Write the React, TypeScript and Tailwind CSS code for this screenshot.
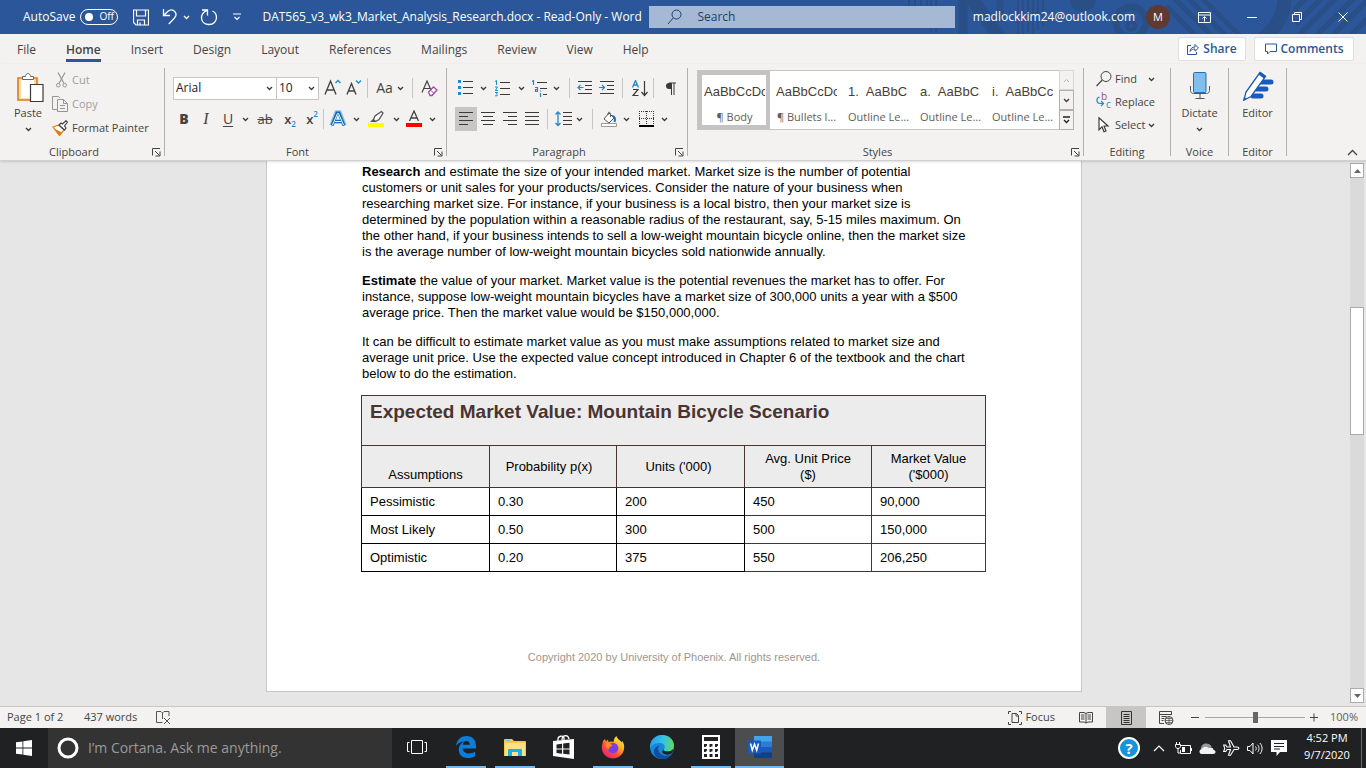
import type { ReactNode } from 'react';

const ui = "font-['Open_Sans','Noto_Sans',sans-serif]";
const doc = "font-['Liberation_Sans',Arial,sans-serif]";

function Svg({ w, h, children, className = '' }: { w: number; h: number; children: ReactNode; className?: string }) {
  return (
    <svg width={w} height={h} viewBox={`0 0 ${w} ${h}`} fill="none" className={`shrink-0 ${className}`} aria-hidden="true">
      {children}
    </svg>
  );
}

function Chevron() {
  return (
    <Svg w={7} h={5}>
      <path d="M1 1l2.5 2.5L6 1" stroke="#3b3a39" strokeWidth="1.3" />
    </Svg>
  );
}

function Tool({ label, className, children }: { label: string; className: string; children: ReactNode }) {
  return (
    <button type="button" aria-label={label} className={`flex h-6 shrink-0 items-center justify-center text-[#444] ${className}`}>
      {children}
    </button>
  );
}

function Sep({ className = '' }: { className?: string }) {
  return <span className={`h-5 w-px shrink-0 bg-[#c8c6c4] ${className}`} />;
}

function Group({ title, className, launcher, children }: { title: string; className: string; launcher?: boolean; children: ReactNode }) {
  return (
    <section aria-label={title} className={`flex flex-col py-1 ${className}`}>
      <div className="flex flex-1 flex-col border-r border-[#b3b0ad]">
        <div className="flex-1">{children}</div>
        <div className="flex h-2 items-center">
          <span className="flex-1 text-center text-[11px] leading-4">{title}</span>
          {launcher && (
            <button type="button" aria-label={`${title} settings`} className="flex w-4 items-center justify-end pr-[3px]">
              <Svg w={9} h={9}>
                <path d="M.5 7.500V.5H8M3 3l4.500 4.500M8 3.500V8H3.500" stroke="#444" />
              </Svg>
            </button>
          )}
        </div>
      </div>
    </section>
  );
}

const tabs = ['File', 'Home', 'Insert', 'Design', 'Layout', 'References', 'Mailings', 'Review', 'View', 'Help'];

function TitleBar() {
  return (
    <header className="relative flex h-[34px] shrink-0 items-center overflow-hidden bg-[#2b579a] text-white">
      <svg width="536" height="34" viewBox="0 0 536 34" fill="none" className="absolute top-0 right-0" aria-hidden="true">
        <g stroke="#294f86">
          <path d="M79 0v6M85 0v6M91 0v6M97 0v6M101 0v32M106 0v32M188 0v34M193 0v34M198 0v32M203 0v34M208 0v30M213 0v26" strokeWidth="2" />
          <path d="M133 0v34" strokeWidth="9" />
          <path d="M138 -6l34 46" strokeWidth="13" />
          <path d="M170 0v22" strokeWidth="7" />
          <circle cx="301" cy="22" r="15" strokeWidth="7" />
          <circle cx="301" cy="26" r="4" strokeWidth="4" />
          <path d="M344 -2l38 38M358 -2l38 38M372 -2l38 38M336 6l30 30" strokeWidth="5" />
          <path d="M454 -4c2 16-8 34-24 44" strokeWidth="14" />
          <path d="M464 10l12-12M466 24l26-26M466 38l40-40M484 38l40-40M500 38l40-40M518 38l20-20" strokeWidth="5" />
        </g>
        <circle cx="253" cy="-1" r="13" fill="#294f86" />
      </svg>
      <div className="relative flex w-full items-center">
        <label className="ml-[23px] flex items-center gap-[5px] text-xs">
          AutoSave
          <span className="relative flex h-4 w-[38px] items-center rounded-full border border-white">
            <input type="checkbox" role="switch" className="absolute inset-0 appearance-none" />
            <span className="ml-1 size-2 rounded-full bg-white" />
            <span className="ml-1.5 text-[10px]">Off</span>
          </span>
        </label>
        <button type="button" aria-label="Save" className="ml-[15px]">
          <Svg w={16} h={17}>
            <path d="M.5 1h15v15H3L.5 13.500zM3.500 1v6h9V1M4.500 16v-5h7v5M7 16v-2.500" stroke="#fff" strokeWidth="1.200" />
          </Svg>
        </button>
        <button type="button" aria-label="Undo" className="ml-[13px]">
          <Svg w={16} h={18}>
            <path d="M1.500 1v6.500H8M1.500 7.500L6 3.200c4-3.400 9 .8 7.800 4.600-.8 2.400-4 5-7 8.200" stroke="#fff" strokeWidth="1.300" />
          </Svg>
        </button>
        <button type="button" aria-label="Undo history" className="ml-[5px]">
          <Svg w={7} h={5}><path d="M1 1l2.500 2.500L6 1" stroke="#fff" strokeWidth="1.300" /></Svg>
        </button>
        <button type="button" aria-label="Repeat" className="ml-[10px]">
          <Svg w={18} h={18}>
            <path d="M2 2h5.500v5.500M7.300 2.300C3 4 1.200 7 1.500 10.500c.6 4 4 6 7.500 6 4.500 0 7.500-3.200 7.500-7 0-3-1.600-5.400-4-6.500" stroke="#fff" strokeWidth="1.300" />
          </Svg>
        </button>
        <button type="button" aria-label="Customize toolbar" className="ml-[15px]">
          <Svg w={8} h={8}><path d="M0 1h8M1.500 4L4 6.500 6.500 4" stroke="#fff" strokeWidth="1.200" /></Svg>
        </button>
        <span className="ml-[21px] w-[387px] text-xs whitespace-nowrap">DAT565_v3_wk3_Market_Analysis_Research.docx - Read-Only - Word</span>
        <label className="flex h-[22px] w-[306px] items-center bg-[#a5b8d4] pl-[18px]">
          <Svg w={16} h={16}>
            <circle cx="9.500" cy="5.500" r="4.500" stroke="#1e3f70" />
            <path d="M6.300 8.800L1 15" stroke="#1e3f70" />
          </Svg>
          <input type="text" aria-label="Search" placeholder="Search" className="ml-[14px] w-full bg-transparent text-xs outline-none placeholder:text-[#1e3f70]" />
        </label>
        <span className="ml-auto text-xs">madlockkim24@outlook.com</span>
        <span className="mr-[28px] ml-[11px] flex size-6 items-center justify-center rounded-full bg-[#5f3a31] text-[11px]">M</span>
        <button type="button" aria-label="Ribbon display options" className="mr-[36px]">
          <Svg w={13} h={11}><path d="M.5.500h12v10H.5zM.5 3h12M6.500 9.500V5M4.500 6.500l2-2 2 2" stroke="#fff" /></Svg>
        </button>
        <button type="button" aria-label="Minimize" className="mr-[35px]">
          <Svg w={10} h={10}><path d="M0 5.500h10" stroke="#fff" /></Svg>
        </button>
        <button type="button" aria-label="Restore" className="mr-[36px]">
          <Svg w={10} h={10}><path d="M.5 2.500h7v7h-7zM2.500 2.500v-2h7v7h-2" stroke="#fff" /></Svg>
        </button>
        <button type="button" aria-label="Close" className="mr-[18px]">
          <Svg w={10} h={10}><path d="M.5.500l9 9M9.500.500l-9 9" stroke="#fff" /></Svg>
        </button>
      </div>
    </header>
  );
}

function Tabs() {
  return (
    <nav className="flex h-[30px] shrink-0 items-center bg-[#f3f2f1] pr-3 pl-[17px] text-xs">
      <div className="flex flex-1 items-center gap-[30px]">
        {tabs.map((t) => (
          <button
            key={t}
            type="button"
            className={t === 'Home' ? 'relative h-7 pt-0.5 font-semibold after:absolute after:inset-x-0 after:bottom-px after:h-[3px] after:bg-[#2b579a]' : 'h-7 pt-0.5'}
          >
            {t}
          </button>
        ))}
      </div>
      <div className="flex gap-2 font-semibold text-[#2b579a]">
        <button type="button" className="flex h-6 w-[68px] items-center justify-center gap-1 rounded-xs border border-[#e1dfdd] bg-white">
          <Svg w={12} h={12}>
            <path d="M4 2.500H.5v9h9V9M3 8.500c.3-3 2-4.500 5-4.500V1.500L11.500 5 8 8.200V6C6 6 4.300 6.500 3 8.500z" stroke="#2b579a" />
          </Svg>
          Share
        </button>
        <button type="button" className="flex h-6 w-[100px] items-center justify-center gap-1 rounded-xs border border-[#e1dfdd] bg-white">
          <Svg w={12} h={12}><path d="M.5 1h11v7.500H5L2.500 11V8.500h-2z" stroke="#2b579a" /></Svg>
          Comments
        </button>
      </div>
    </nav>
  );
}

function Clipboard() {
  return (
    <Group title="Clipboard" launcher className="w-[165px]">
      <div className="flex">
        <button type="button" className="flex w-[56px] flex-col items-center pt-1 text-[11px]">
          <Svg w={28} h={31} className="ml-1">
            <path d="M2 6h19v22H2z" fill="#fbe1a8" stroke="#e07b14" strokeWidth="1.600" />
            <path d="M5 8h13v18H5z" fill="#fff" />
            <path d="M6.500 7.500v-3h3c.3-4 4.600-4 5 0h3v3z" fill="#fff" stroke="#666" />
            <path d="M14.500 12.500h12.500v17H14.500z" fill="#fff" stroke="#3b3a39" strokeWidth="1.200" />
          </Svg>
          <span className="mt-0.5 leading-4">Paste</span>
          <span className="mt-1.5"><Chevron /></span>
        </button>
        <div className="flex flex-col text-[11px]">
          <button type="button" disabled className="flex h-6 items-center gap-[5px] text-[#a19f9d]">
            <Svg w={11} h={16}>
              <path d="M2 .5l6 11M9 .5l-6 11" stroke="#979593" strokeWidth="1.200" />
              <circle cx="2.300" cy="13.200" r="1.800" stroke="#979593" /><circle cx="8.700" cy="13.200" r="1.800" stroke="#979593" />
            </Svg>
            Cut
          </button>
          <button type="button" disabled className="-ml-1 flex h-6 items-center gap-1 text-[#a19f9d]">
            <Svg w={16} h={16}>
              <path d="M5 13.500H.5V.5h6L8 2M5.500 3.500h6l4 4v8h-10zM11.500 3.500v4h4M8 9.500h5M8 12.500h5" stroke="#979593" />
            </Svg>
            Copy
          </button>
          <button type="button" className="-ml-1 flex h-6 items-center gap-1">
            <Svg w={16} h={16}>
              <path d="M1 7l6-2 5 5-4.500 5.500z" fill="#fff" stroke="#e07b14" strokeWidth="1.200" />
              <path d="M2 9l3 1 5 2.500-2.500 3z" fill="#e07b14" />
              <path d="M7 5l5.500 5 1.500-2-1.500-2L15.500 2 14 .7 10.500 4 9 3z" fill="#fff" stroke="#444" strokeWidth="1.200" />
            </Svg>
            Format Painter
          </button>
        </div>
      </div>
    </Group>
  );
}

function FontGroup() {
  return (
    <Group title="Font" launcher className="w-[282px]">
      <div className="flex items-center pt-2 pl-2">
        <span className="relative flex h-[23px] w-[104px] items-center border border-[#c8c6c4] bg-white">
          <select aria-label="Font name" className="size-full appearance-none pl-0.5 text-xs text-[#222] outline-none"><option>Arial</option></select>
          <span className="pointer-events-none absolute right-[3px]"><Chevron /></span>
        </span>
        <span className="relative -ml-px flex h-[23px] w-[43px] items-center border border-[#c8c6c4] bg-white">
          <select aria-label="Font size" className="size-full appearance-none pl-0.5 text-xs text-[#222] outline-none"><option>10</option></select>
          <span className="pointer-events-none absolute right-[3px]"><Chevron /></span>
        </span>
        <Tool label="Grow font" className="ml-1 w-[18px]">
          <Svg w={17} h={18}><path d="M1 15.500L6.500 2 12 15.500M3 11h7" stroke="#444" strokeWidth="1.400" /><path d="M11.500 4L14 1.500 16.500 4" stroke="#1e8bcd" strokeWidth="1.300" /></Svg>
        </Tool>
        <Tool label="Shrink font" className="ml-1 w-[18px]">
          <Svg w={16} h={18}><path d="M1 15.500L5.500 4.500 10 15.500M2.500 12h6" stroke="#444" strokeWidth="1.400" /><path d="M10 1.500L12.500 4 15 1.500" stroke="#1e8bcd" strokeWidth="1.300" /></Svg>
        </Tool>
        <Sep className="ml-1" />
        <Tool label="Change case" className="w-[44px] gap-1 text-sm">Aa<Chevron /></Tool>
        <Sep />
        <Tool label="Clear formatting" className="ml-1 w-6">
          <Svg w={17} h={17}><path d="M1 12.500L6 1l5 11.500M2.800 8.500h6" stroke="#444" strokeWidth="1.200" /><path d="M7.500 12l5-5 3.500 3-5 5.500H9z" fill="#fff" stroke="#a349a4" strokeWidth="1.300" /><path d="M9.500 10l3 3" stroke="#a349a4" /></Svg>
        </Tool>
      </div>
      <div className="mt-[7px] flex items-center pl-2 text-sm">
        <Tool label="Bold" className="w-[22px] font-bold"><b>B</b></Tool>
        <Tool label="Italic" className="w-[22px] font-['Liberation_Serif',serif] text-base"><i>I</i></Tool>
        <Tool label="Underline" className="w-[22px]"><u className="underline-offset-2">U</u></Tool>
        <Tool label="Underline style" className="w-3"><Chevron /></Tool>
        <Tool label="Strikethrough" className="w-[28px] text-[13px]"><s>ab</s></Tool>
        <Tool label="Subscript" className="w-[22px] text-[13px] font-semibold"><Script low /></Tool>
        <Tool label="Superscript" className="w-[22px] text-[13px] font-semibold"><Script /></Tool>
        <Sep />
        <Tool label="Text effects" className="w-7">
          <Svg w={18} h={18}><path d="M2.500 15.500L7.500 2.500h3l5 13M5 11.500h8" stroke="#8ec4ee" strokeWidth="4.500" /><path d="M3 15.500L8 3h2l5 12.500M5.500 11.500h7" stroke="#1667b5" strokeWidth="3" /><path d="M3.500 15L8.500 3.500h1L14.500 15M6 11.500h6" stroke="#fff" /></Svg>
        </Tool>
        <Tool label="Text effects options" className="w-2"><Chevron /></Tool>
        <Tool label="Highlight colour" className="w-8">
          <Svg w={16} h={18}><path d="M13.500 1.500L7 6l-1.500 3.500 2 2L11 9.500l4-6.500z" fill="#fff" stroke="#555" strokeWidth="1.300" /><path d="M2 12l3-3 3 2.500-1 .5z" fill="#555" /><path d="M0 13h16v4H0z" fill="#ff0" /></Svg>
        </Tool>
        <Tool label="Highlight options" className="w-2"><Chevron /></Tool>
        <Tool label="Font colour" className="w-7">
          <Svg w={16} h={18}><path d="M3.500 11L8 1l4.500 10M5 8h6" stroke="#444" strokeWidth="1.300" /><path d="M0 13h16v4H0z" fill="#f00" /></Svg>
        </Tool>
        <Tool label="Font colour options" className="w-2"><Chevron /></Tool>
      </div>
    </Group>
  );
}

function Script({ low }: { low?: boolean }) {
  return (
    <span className="flex leading-4">
      x<span className={low ? 'self-end text-[8px] leading-[6px] text-[#1e8bcd]' : 'self-start text-[8px] leading-[6px] text-[#1e8bcd]'}>2</span>
    </span>
  );
}

function Lines({ rows }: { rows: string }) {
  return <Svg w={16} h={16}><path d={rows} stroke="#3b3a39" /></Svg>;
}

function Paragraph() {
  return (
    <Group title="Paragraph" launcher className="w-[241px]">
      <div className="flex items-center pt-2 pl-2">
        <Tool label="Bullets" className="w-[22px]">
          <Svg w={16} h={16}><path d="M0 0h3v3H0zM0 6h3v3H0zM0 12h3v3H0z" fill="#1e8bcd" /><path d="M5 1.500h10M5 7.500h10M5 13.500h10" stroke="#3b3a39" /></Svg>
        </Tool>
        <Tool label="Bullet options" className="w-3"><Chevron /></Tool>
        <Tool label="Numbering" className="ml-0.5 w-6">
          <Svg w={16} h={17}><path d="M0 1.500L1.500.5V5M0 7h2.500L.3 10.500H3M0 12.500h2.500L1.500 14l1 .8-.5 1H0" stroke="#1e8bcd" /><path d="M5 2.500h10M5 8.500h10M5 14.500h10" stroke="#3b3a39" /></Svg>
        </Tool>
        <Tool label="Numbering options" className="w-3"><Chevron /></Tool>
        <Tool label="Multilevel list" className="ml-0.5 w-[22px]">
          <Svg w={16} h={17}><path d="M0 1.500L1.500.5V5M3 7.500h2.500v4H3.500v-2h2M8.500 13v4M8.500 10.500v1" stroke="#1e8bcd" strokeWidth="1.200" /><path d="M5 2.500h10M8 8.500h7M11 14.500h4" stroke="#3b3a39" /></Svg>
        </Tool>
        <Tool label="Multilevel options" className="w-2.5"><Chevron /></Tool>
        <Sep className="ml-2" />
        <Tool label="Decrease indent" className="ml-1 w-[22px]">
          <Svg w={16} h={14}><path d="M1 .5h14M8 4.500h7M8 8.500h7M1 12.500h14" stroke="#3b3a39" /><path d="M6.500 6.500H1M3.500 4L1 6.500 3.500 9" stroke="#1e8bcd" strokeWidth="1.200" /></Svg>
        </Tool>
        <Tool label="Increase indent" className="w-[22px]">
          <Svg w={16} h={14}><path d="M1 .5h14M8 4.500h7M8 8.500h7M1 12.500h14" stroke="#3b3a39" /><path d="M0 6.500h5.500M3 4l2.500 2.500L3 9" stroke="#1e8bcd" strokeWidth="1.200" /></Svg>
        </Tool>
        <Sep className="ml-1" />
        <Tool label="Sort" className="ml-1 w-[26px]">
          <Svg w={17} h={17}><path d="M.5 7.500L3.500.5l3 7M1.500 5h4" stroke="#1e8bcd" strokeWidth="1.300" /><path d="M1 9.500h5L1 15.500h5.500M12.500 1v14M9.500 12l3 3.500 3-3.500" stroke="#3b3a39" strokeWidth="1.200" /></Svg>
        </Tool>
        <Sep />
        <Tool label="Show marks" className="ml-1 w-6">
          <Svg w={11} h={13}><path d="M6 1H4a3 3 0 000 6h2z" fill="#3b3a39" /><path d="M4 1h7M6.500 1v12M9 1v12" stroke="#3b3a39" /></Svg>
        </Tool>
      </div>
      <div className="mt-[7px] flex items-center pl-2">
        <Tool label="Align left" className="w-[22px] bg-[#c8c6c4]"><Lines rows="M1 1.500h14M1 5.500h9M1 9.500h14M1 13.500h9" /></Tool>
        <Tool label="Centre" className="w-[22px]"><Lines rows="M1 1.500h14M3 5.500h10M1 9.500h14M3 13.500h10" /></Tool>
        <Tool label="Align right" className="w-[22px]"><Lines rows="M1 1.500h14M6 5.500h9M1 9.500h14M6 13.500h9" /></Tool>
        <Tool label="Justify" className="w-[22px]"><Lines rows="M1 1.500h14M1 5.500h14M1 9.500h14M1 13.500h14" /></Tool>
        <Sep className="ml-1" />
        <Tool label="Line spacing" className="ml-1 w-[22px]">
          <Svg w={17} h={16}><path d="M3 1v14M.5 3.500L3 1l2.500 2.500M.5 12L3 14.500 5.500 12" stroke="#1e8bcd" strokeWidth="1.300" /><path d="M8 1.500h9M8 5.500h9M8 9.500h9M8 13.500h9" stroke="#3b3a39" /></Svg>
        </Tool>
        <Tool label="Spacing options" className="w-2.5"><Chevron /></Tool>
        <Sep className="ml-2" />
        <Tool label="Shading" className="ml-1 w-6">
          <Svg w={16} h={17}><path d="M3 8l5-6 5 5-5 5z" stroke="#555" fill="#fff" /><path d="M7 4c-.5-3 2-4 2.500-1v3" stroke="#555" /><path d="M11 5c3 0 3.500 3 2.500 6" stroke="#1e6fb8" strokeWidth="2" /><path d="M.5 12.500h15v3H.5z" fill="#fff" stroke="#999" /></Svg>
        </Tool>
        <Tool label="Shading options" className="w-2.5"><Chevron /></Tool>
        <Tool label="Borders" className="ml-1 w-[22px]">
          <Svg w={15} h={16}><path d="M.5 0v14M7.500 0v14M14.500 0v14M0 .5h15M0 7.500h15" stroke="#3b3a39" strokeDasharray="1 1" /><path d="M0 15h15" stroke="#000" strokeWidth="2" /></Svg>
        </Tool>
        <Tool label="Border options" className="ml-0.5 w-2.5"><Chevron /></Tool>
      </div>
    </Group>
  );
}

const styleCells: { mark: string; sample: string; name: string }[] = [
  { mark: '', sample: 'AaBbCcDc', name: '¶ Body' },
  { mark: '', sample: 'AaBbCcDc', name: '¶ Bullets l...' },
  { mark: '1.', sample: 'AaBbC', name: 'Outline Le...' },
  { mark: 'a.', sample: 'AaBbC', name: 'Outline Le...' },
  { mark: 'i.', sample: 'AaBbCc', name: 'Outline Le...' },
];

function Styles() {
  return (
    <Group title="Styles" launcher className="min-w-[396px] flex-1">
      <div className="flex pt-0.5 pr-[9px] pl-[9px]">
        <div className="flex h-[60px] flex-1 border border-[#c8c6c4] bg-white">
          {styleCells.map((c, i) => (
            <button
              key={i}
              type="button"
              className={
                i === 0
                  ? 'flex w-[72px] flex-col overflow-hidden border-4 border-[#c3c3c3] pr-px pl-0.5 pt-[9px]'
                  : 'flex w-[72px] flex-col overflow-hidden pr-[5px] pl-1.5 pt-[13px]'
              }
            >
              <span className={`flex w-full overflow-hidden text-left text-[13px] leading-[16px] whitespace-nowrap text-[#4a3c37] ${doc}`}>
                {c.mark && <span className="mr-[7px] shrink-0">{c.mark}</span>}
                {c.sample}
              </span>
              <span className="mt-2 w-full text-center text-[11px] leading-[17px] whitespace-nowrap text-[#605e5c]">{c.name}</span>
            </button>
          ))}
        </div>
        <div className="-ml-px flex w-[15px] flex-col">
          <button type="button" aria-label="Previous styles" className="flex flex-1 items-center justify-center border border-[#d8d6d4]">
            <Svg w={7} h={5}><path d="M1 4l2.500-2.500L6 4" stroke="#b8b6b4" /></Svg>
          </button>
          <button type="button" aria-label="Next styles" className="flex flex-1 items-center justify-center border border-[#b3b0ad]"><Chevron /></button>
          <button type="button" aria-label="More styles" className="flex flex-1 items-center justify-center border border-[#b3b0ad]">
            <Svg w={7} h={8}><path d="M0 1h7M1 4l2.500 2.500L6 4" stroke="#222" strokeWidth="1.300" /></Svg>
          </button>
        </div>
      </div>
    </Group>
  );
}

function Ribbon() {
  return (
    <div className="relative z-10 flex h-[97px] shrink-0 border-b border-[#d2d0ce] bg-[#f3f2f1] shadow-sm">
      <Clipboard />
      <FontGroup />
      <Paragraph />
      <Styles />
      <Group title="Editing" className="w-[87px]">
        <div className="flex flex-col pl-3 text-[11px]">
          <button type="button" className="flex h-[22px] items-center gap-[3px]">
            <Svg w={16} h={16}><circle cx="10" cy="5.500" r="5" stroke="#444" /><path d="M6.300 9L.5 15" stroke="#444" strokeWidth="1.200" /></Svg>
            Find<span className="ml-2"><Chevron /></span>
          </button>
          <button type="button" className="flex h-6 items-center gap-1">
            <span className="relative h-4 w-[15px]">
              <Svg w={15} h={16}><path d="M3.500 3C0 4 0 9 4 9.500h3.500M5 7l2.500 2.500L5 12" stroke="#1e8bcd" strokeWidth="1.200" /></Svg>
              <span className="absolute -top-1 left-[5px] text-[10px] leading-[12px] text-[#a349a4]">b</span>
              <span className="absolute top-1 left-[10px] text-[10px] leading-[12px] text-[#1e8bcd]">c</span>
            </span>
            Replace
          </button>
          <button type="button" className="flex h-[22px] items-center gap-[3px]">
            <Svg w={16} h={16}><path d="M3 .8v12l3-3 2 5 2-.8-2-5h4z" stroke="#3b3a39" fill="#fff" strokeWidth="1.200" /></Svg>
            Select<Chevron />
          </button>
        </div>
      </Group>
      <Group title="Voice" className="w-[58px]">
        <button type="button" className="flex w-full flex-col items-center pt-[3px] text-[11px]">
          <Svg w={20} h={30}>
            <path d="M.5 15v4.500c0 2 1.500 3 3 3h13c1.500 0 3-1 3-3V15M10 23v4M5.500 27.500h9" stroke="#555" />
            <rect x="3.500" y="1.500" width="12.500" height="20" rx="1" fill="#83bdec" stroke="#1a73b8" />
          </Svg>
          <span className="mt-1 leading-4">Dictate</span>
          <span className="mt-1.5"><Chevron /></span>
        </button>
      </Group>
      <Group title="Editor" className="w-[58px]">
        <button type="button" className="flex w-full flex-col items-center pt-[3px] text-[11px]">
          <Svg w={32} h={30}>
            <path d="M17 11h12M14 18h10M11 25h8" stroke="#185abd" strokeWidth="5" strokeLinecap="round" />
            <path d="M2 29l2-8L18 1.500 23.500 5.500 9 25.500z" fill="#fff" stroke="#185abd" strokeWidth="1.300" />
            <path d="M18.500 1l5.500 4-2 2.500-5.500-4zM1 30l1-4 2.500 2z" fill="#185abd" />
          </Svg>
          <span className="mt-1 leading-4">Editor</span>
        </button>
      </Group>
      <div className="flex w-[79px] items-end justify-end pr-2 pb-1">
        <button type="button" aria-label="Collapse ribbon"><Svg w={11} h={7}><path d="M1 6l4.500-4.500L10 6" stroke="#444" strokeWidth="1.300" /></Svg></button>
      </div>
    </div>
  );
}

const paragraphs: { lead: string; lines: string[] }[] = [
  {
    lead: 'Research',
    lines: [
      ' and estimate the size of your intended market. Market size is the number of potential',
      'customers or unit sales for your products/services. Consider the nature of your business when',
      'researching market size. For instance, if your business is a local bistro, then your market size is',
      'determined by the population within a reasonable radius of the restaurant, say, 5-15 miles maximum. On',
      'the other hand, if your business intends to sell a low-weight mountain bicycle online, then the market size',
      'is the average number of low-weight mountain bicycles sold nationwide annually.',
    ],
  },
  {
    lead: 'Estimate',
    lines: [
      ' the value of your market. Market value is the potential revenues the market has to offer. For',
      'instance, suppose low-weight mountain bicycles have a market size of 300,000 units a year with a $500',
      'average price. Then the market value would be $150,000,000.',
    ],
  },
  {
    lead: '',
    lines: [
      'It can be difficult to estimate market value as you must make assumptions related to market size and',
      'average unit price. Use the expected value concept introduced in Chapter 6 of the textbook and the chart',
      'below to do the estimation.',
    ],
  },
];

const rows = [
  ['Pessimistic', '0.30', '200', '450', '90,000'],
  ['Most Likely', '0.50', '300', '500', '150,000'],
  ['Optimistic', '0.20', '375', '550', '206,250'],
];

function DocumentPage() {
  return (
    <main className="flex min-h-0 flex-1 overflow-hidden bg-[#e6e6e6]">
      <div className="flex-1">
        <article className={`mx-auto h-[531px] w-[816px] border border-t-0 border-[#c8c6c4] bg-white px-[95px] pt-[3px] text-[13px] text-black ${doc}`}>
          {paragraphs.map((p, i) => (
            <p key={i} className="mb-[13px] leading-4 whitespace-nowrap">
              {p.lead && <b>{p.lead}</b>}
              {p.lines.map((l, j) => (
                <span key={j}>{l}{j < p.lines.length - 1 && <br />}</span>
              ))}
            </p>
          ))}
          <table className="-ml-px w-[625px] table-fixed border-collapse">
            <colgroup>
              <col className="w-[128px]" /><col className="w-[127px]" /><col className="w-[128px]" /><col className="w-[127px]" /><col />
            </colgroup>
            <thead className="bg-[#ececec]">
              <tr className="h-[50px]">
                <th colSpan={5} className="border border-[#4a3431] px-2 pt-1 text-left align-top text-[19px] leading-6 font-bold text-[#4a3431]">
                  Expected Market Value: Mountain Bicycle Scenario
                </th>
              </tr>
              <tr className="h-[42px] leading-4">
                <th className="border border-[#4a3431] px-2 pb-1 align-bottom font-normal">Assumptions</th>
                <th className="border border-[#4a3431] pr-2 font-normal">Probability p(x)</th>
                <th className="border border-[#4a3431] pr-1 font-normal">Units ('000)</th>
                <th className="border border-[#4a3431] font-normal">Avg. Unit Price<br />($)</th>
                <th className="border border-[#4a3431] font-normal">Market Value<br />('$000)</th>
              </tr>
            </thead>
            <tbody>
              {rows.map((r) => (
                <tr key={r[0]} className="h-7">
                  {r.map((c, j) => (
                    <td key={j} className={j < 3 ? 'border border-black px-2' : 'border border-[#4a3431] px-2'}>{c}</td>
                  ))}
                </tr>
              ))}
            </tbody>
          </table>
          <footer className="mt-[77px] text-center text-[11px] leading-4 text-[#a09590]">Copyright 2020 by University of Phoenix. All rights reserved.</footer>
        </article>
      </div>
      <div className="flex w-[18px] flex-col pr-0.5 pb-[3px] pl-0.5 pt-0.5">
        <button type="button" aria-label="Scroll up" className="flex h-[15px] shrink-0 items-center justify-center border border-[#ababab] bg-white">
          <Svg w={7} h={4}><path d="M0 4L3.500 0 7 4z" fill="#666" /></Svg>
        </button>
        <div className="basis-[129px] bg-[#dadada]" />
        <div className="h-[128px] shrink-0 border border-[#ababab] bg-white" />
        <div className="flex-1 bg-[#dadada]" />
        <button type="button" aria-label="Scroll down" className="flex h-[15px] shrink-0 items-center justify-center border border-[#ababab] bg-white">
          <Svg w={7} h={4}><path d="M0 0h7L3.500 4z" fill="#666" /></Svg>
        </button>
      </div>
    </main>
  );
}

function StatusBar() {
  return (
    <div className="flex h-[22px] shrink-0 items-center border-t border-[#c8c6c4] bg-[#f3f2f1] text-[11px]">
      <button type="button" className="ml-[7px] w-[77px] text-left">Page 1 of 2</button>
      <button type="button" className="w-[72px] text-left">437 words</button>
      <button type="button" aria-label="Proofing">
        <Svg w={15} h={14}><path d="M6.500 11.500H.5v-11H5L6.500 2 8 .5h5V5M6.500 2v6M8 7l6 6M14 7l-6 6" stroke="#555" /></Svg>
      </button>
      <button type="button" className="ml-auto flex items-center gap-[3px]">
        <Svg w={14} h={14}><path d="M3 .5H.5v2.500M11 .5h2.500v2.500M3 13.500H.5V11M11 13.500h2.500V11M4 2.500h4.500l2 2v7H4zM8 2.500V5h2.500" stroke="#444" /></Svg>
        Focus
      </button>
      <button type="button" aria-label="Read mode" className="ml-[11px] flex h-full w-10 items-center justify-center">
        <Svg w={14} h={13}><path d="M.5 1.500H5L7 2.500l2-1h4.500v9.500H9l-2 1-2-1H.5zM7 2v10M2 4h3.500M2 6h3.500M2 8h3.500M8.500 4H12M8.500 6H12M8.500 8H12" stroke="#444" /></Svg>
      </button>
      <button type="button" aria-label="Print layout" className="flex h-full w-10 items-center justify-center bg-[#c8c6c4]">
        <Svg w={11} h={14}><path d="M.5.500h10v13H.5zM2.500 3.500h6M2.500 5.500h6M2.500 7.500h6M2.500 9.500h6M2.500 11.500h6" stroke="#333" /></Svg>
      </button>
      <button type="button" aria-label="Web layout" className="flex h-full w-10 items-center justify-center">
        <Svg w={15} h={14}><path d="M5 12.500H.5V.5h12V4M.5 3.500h12M2.500 5.500h5M2.500 7.500h3M2.500 9.500h2" stroke="#444" /><circle cx="10" cy="9.500" r="4" fill="#f3f2f1" stroke="#444" /><path d="M6 9.500h8M10 5.500v8M7 7.500h6M7 11.500h6" stroke="#444" strokeWidth=".7" /></Svg>
      </button>
      <button type="button" aria-label="Zoom out" className="ml-[5px]"><Svg w={9} h={9}><path d="M0 4.500h8" stroke="#444" /></Svg></button>
      <input
        type="range"
        aria-label="Zoom"
        defaultValue={50}
        className="mx-[5px] h-3 w-[100px] appearance-none bg-[linear-gradient(#a6a6a6,#a6a6a6)] bg-[length:100%_1px] bg-center bg-no-repeat [&::-webkit-slider-thumb]:h-[11px] [&::-webkit-slider-thumb]:w-[5px] [&::-webkit-slider-thumb]:appearance-none [&::-webkit-slider-thumb]:bg-[#666]"
      />
      <button type="button" aria-label="Zoom in"><Svg w={9} h={9}><path d="M0 4.500h8M4 .5v8" stroke="#444" /></Svg></button>
      <button type="button" className="mr-2 w-[39px] text-right whitespace-nowrap text-[#605e5c]">100%</button>
    </div>
  );
}

function Task({ label, running, active, children }: { label: string; running?: boolean; active?: boolean; children: ReactNode }) {
  return (
    <button
      type="button"
      aria-label={label}
      className={`flex h-full w-[49px] items-center justify-center ${active ? 'bg-[#4c4d4f]' : ''}`}
    >
      <span className={`flex h-full shrink-0 items-center justify-center border-b-2 ${active ? 'w-full' : 'w-10'} ${running ? 'border-[#76b9ed]' : 'border-transparent'}`}>
        {children}
      </span>
    </button>
  );
}

function Taskbar() {
  return (
    <footer className="flex h-10 shrink-0 items-center bg-[#1f2123] text-white">
      <button type="button" aria-label="Start" className="flex h-full w-12 items-center justify-center">
        <Svg w={16} h={16}><path d="M0 2.300l6.500-.9v6.100H0zM7.300 1.300L16 0v7.500H7.300zM0 8.400h6.500v6.200L0 13.700zM7.300 8.400H16V16l-8.700-1.300z" fill="#fff" /></Svg>
      </button>
      <label className="flex h-full w-[344px] items-center bg-[#333] pl-[9px]">
        <Svg w={22} h={22}><circle cx="11" cy="11" r="9" stroke="#fff" strokeWidth="3" /></Svg>
        <input type="text" aria-label="Ask Cortana" placeholder="I’m Cortana. Ask me anything." className="ml-[9px] w-full bg-transparent text-sm outline-none placeholder:text-[#9a9a9a]" />
      </label>
      <Task label="Task view"><Svg w={20} h={14}><path d="M4.500.500h11v13h-11zM2.500 2.500H.5v9h2M17.500 2.500h2v9h-2" stroke="#fff" /></Svg></Task>
      <Task label="Edge" running>
        <Svg w={20} h={22}><path d="M0 10C1 3 5.500 0 10.500 0 17 0 20 4.500 20 10v2.500H6.700c.3 3.500 3 5 6.300 5 2.200 0 4.300-.6 6-1.700v4.400C17.200 21.400 14.700 22 12 22 6.300 22 2.700 18.700 2.700 13.500c0-3.700 2.100-6.600 5.300-8.100C4 5.500 1.700 7.500 0 10zm6.800-1.300h7C13.800 6.500 12.700 5 10.700 5 8.500 5 7 6.700 6.800 8.700z" fill="#0b7ddb" /></Svg>
      </Task>
      <Task label="File Explorer" running>
        <Svg w={22} h={19}><path d="M0 2a1 1 0 011-1h7l2 2h11a1 1 0 011 1v14H0z" fill="#f5c84c" /><path d="M1 5h20v13H1z" fill="#ffe08a" /><path d="M4 18v-6a1 1 0 011-1h12a1 1 0 011 1v6h-4v-4H8v4z" fill="#17b3e6" /><path d="M2 2.500h4" stroke="#5bc8f0" /></Svg>
      </Task>
      <Task label="Store">
        <Svg w={22} h={24}><path d="M0 6l21-2v20L0 21z" fill="#fff" /><path d="M5 6V4c0-3 5-4 6-1v2M9 5c0-5 6-6 7-1" stroke="#fff" strokeWidth="1.300" /><path d="M3.500 9.500l5.500-.8v4.800H3.500zM10.200 8.500l6.300-.8v5.800h-6.300zM3.500 14.500H9v4.200l-5.500-.6zM10.200 14.500h6.300v5l-6.300-.7z" fill="#222" /></Svg>
      </Task>
      <Task label="Firefox" running>
        <Svg w={24} h={24}>
          <defs>
            <linearGradient id="fx" x1="20" y1="2" x2="5" y2="22" gradientUnits="userSpaceOnUse"><stop stopColor="#fff14f" /><stop offset=".35" stopColor="#ffae1f" /><stop offset=".65" stopColor="#ff5038" /><stop offset="1" stopColor="#e91e75" /></linearGradient>
          </defs>
          <path d="M2 6l2-2 1 2.500 2-2 .5 2.500c2-.8 3.500-.7 5 0 .3-3 1.500-5 3-6 .2 3 4.500 4.500 5 6.500l.8-1.500C23 8.500 23.500 11 23 14c-.8 5.500-5.500 9.500-11 9.500S1.500 19.500.9 14C.6 11 1.500 8.500 2 6z" fill="url(#fx)" />
          <circle cx="12" cy="13" r="5.300" fill="#7b3fe0" /><path d="M4.500 9c3-2 5-.5 7 1.500-2 1-3.500 1.500-3.500 4-2.500-1-4-3-3.500-5.500z" fill="#ff8a2a" />
        </Svg>
      </Task>
      <Task label="Edge Chromium">
        <Svg w={24} h={24}>
          <defs>
            <linearGradient id="eg" x1="1" y1="8" x2="24" y2="12" gradientUnits="userSpaceOnUse"><stop stopColor="#2a9fe8" /><stop offset=".5" stopColor="#35c1e8" /><stop offset="1" stopColor="#5fdc52" /></linearGradient>
          </defs>
          <circle cx="12" cy="12" r="12" fill="#1688d8" />
          <path d="M0 11C1 4 6 0 12 0c7 0 12 5 12 10.500 0 4-3 6-6.500 6-3 0-4-1.200-3.500-2.200 2-2.300.5-6.300-4-6.300C5 8 1 10 0 14z" fill="url(#eg)" />
          <path d="M9.500 10.500C7 12.500 8 19 14 20.500c3 .7 6-.2 8.200-2C20 22 16.500 24 12.500 24 7 24 3.500 20 4 16c.3-3 2.500-5 5.500-5.500z" fill="#114f9e" />
          <path d="M13.500 14c-.5 1.300.8 2.500 4 2.500 2.500 0 4.500-.8 5.700-2.500-.2 2-.6 3.500-1.500 4.500-3.200 2-8 1.300-9.700-1.500z" fill="#1f2123" />
        </Svg>
      </Task>
      <Task label="Calculator" running>
        <Svg w={18} h={24}><path d="M0 0h18v24H0z" fill="#fff" /><path d="M2 2h14v4H2zM2 9h3v3H2zM7.500 9h3v3h-3zM13 9h3v3h-3zM2 14h3v3H2zM7.500 14h3v3h-3zM13 14h3v3h-3zM2 19h3v3H2zM7.500 19h3v3h-3zM13 19h3v3h-3z" fill="#222" /><path d="M3.500 12l1.500-1.500V12zM9 12l1.500-1.500V12zM14.500 12l1.500-1.500V12zM3.500 17l1.500-1.500V17zM9 17l1.500-1.500V17zM14.500 17l1.500-1.500V17z" fill="#fff" /></Svg>
      </Task>
      <Task label="Word" running active>
        <Svg w={24} h={22}><path d="M6 0h18v6H6z" fill="#41a5ee" /><path d="M6 5.500h18V11H6z" fill="#2b7cd3" /><path d="M6 11h18v5.500H6z" fill="#185abd" /><path d="M6 16.500h18V22H6z" fill="#103f91" /><rect y="4.500" width="13" height="13" rx="1" fill="#185abd" /><path d="M2.500 7.500L4.300 14.200 6.500 8l2.200 6.200 1.800-6.700" stroke="#fff" strokeWidth="1.500" /></Svg>
      </Task>
      <div className="ml-auto flex items-center">
        <button type="button" aria-label="Help">
          <span className="flex size-[22px] items-center justify-center rounded-full border-2 border-white bg-[#1593dc] text-[15px] leading-4 font-bold">?</span>
        </button>
        <button type="button" aria-label="Hidden icons" className="ml-[13px]"><Svg w={12} h={8}><path d="M1 7l5-5 5 5" stroke="#fff" strokeWidth="1.200" /></Svg></button>
        <button type="button" aria-label="Battery" className="ml-[10px]">
          <Svg w={17} h={13}><path d="M6 3.500h9.500v8h-10V8M16.500 6v3M.5 2.500h5v2c0 1-1 2-2.500 2S.5 5.500.5 4.500zM1.500 0v2.500M4.500 0v2.500M3 6.500V11h2" stroke="#fff" /><path d="M7 5h3v5H7z" fill="#fff" /></Svg>
        </button>
        <button type="button" aria-label="OneDrive" className="ml-[7px]">
          <Svg w={17} h={11}><path d="M2 8C1 3 4 .5 7 .5S12 2 12.500 4z" fill="#999" /><path d="M3 11c-3 0-3.500-4-.5-4.700C4 3.500 7.500 3 9.500 5c3-1.500 5 .2 5 2 3 .5 2.500 4-.5 4z" fill="#f2f2f2" /></Svg>
        </button>
        <button type="button" aria-label="Airplane mode" className="ml-[7px]">
          <Svg w={17} h={16}><path d="M.7 5h2L4 7h3.500L5.500.700h2L11 7h3c2.500 0 2.500 2.500 0 2.500h-3L7.500 15.300h-2l2-5.800H4l-1.300 2h-2l1-3z" stroke="#fff" strokeWidth="1.100" /></Svg>
        </button>
        <button type="button" aria-label="Volume" className="ml-[7px]">
          <Svg w={17} h={13}><path d="M.5 4.500H3l3-3.500v11L3 8.500H.5zM8.500 4.500c1 1.200 1 2.800 0 4M10.500 2.800c2 2 2 5.400 0 7.400M12.800 1c3 3 3 8 0 11" stroke="#fff" /></Svg>
        </button>
        <button type="button" aria-label="Notifications" className="ml-[7px]">
          <Svg w={16} h={16}><path d="M0 0h16v12H9l-3.500 4v-4H0z" fill="#fff" /><path d="M3 3.500h10M3 6.500h10M3 9h6" stroke="#222" /></Svg>
        </button>
        <div className="mr-[9px] ml-[15px] w-[50px] pb-1 text-center text-[11px] leading-[17px] whitespace-nowrap">4:52 PM<br />9/7/2020</div>
        <span className="mr-1 h-10 w-px bg-[#6a6a6a]" />
      </div>
    </footer>
  );
}

export default function App() {
  return (
    <div className={`flex h-screen flex-col overflow-hidden text-[#444] ${ui}`}>
      <TitleBar />
      <Tabs />
      <Ribbon />
      <DocumentPage />
      <StatusBar />
      <Taskbar />
    </div>
  );
}
